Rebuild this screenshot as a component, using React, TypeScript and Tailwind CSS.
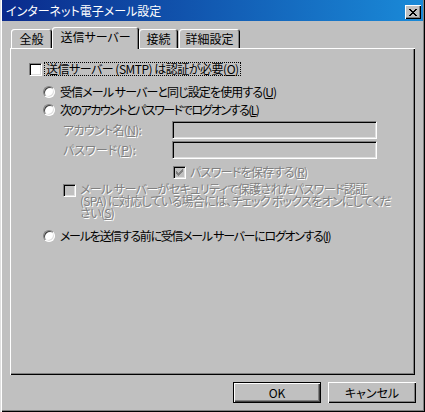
import React from "react";

const X_PIX = ["11000011", "01100110", "00111100", "00011000", "00111100", "01100110", "11000011"];

function CloseGlyph() {
  const rects: React.ReactElement[] = [];
  X_PIX.forEach((row, y) =>
    row.split("").forEach((c, x) => {
      if (c === "1") rects.push(<rect key={`${x}-${y}`} x={x} y={y} width={1} height={1} fill="#000" />);
    })
  );
  return (
    <svg width="8" height="7" viewBox="0 0 8 7" shapeRendering="crispEdges">
      {rects}
    </svg>
  );
}

function Radio() {
  return (
    <div className="w-[12px] h-[12px] shrink-0 rounded-full bg-white border border-t-[#808080] border-l-[#808080] border-b-white border-r-white shadow-[inset_1px_1px_0_#404040,inset_-1px_-1px_0_#dfdfdf]" />
  );
}

function Checkbox({ disabled, checked }: { disabled?: boolean; checked?: boolean }) {
  return (
    <div
      className={
        "w-[13px] h-[13px] shrink-0 flex items-center justify-center border border-t-[#808080] border-l-[#808080] border-b-white border-r-white shadow-[inset_1px_1px_0_#000,inset_-1px_-1px_0_#dfdfdf] " +
        (disabled ? "bg-[#c0c0c0]" : "bg-white")
      }
    >
      {checked && (
        <svg width="7" height="7" viewBox="0 0 7 7" shapeRendering="crispEdges">
          <path
            d="M0 2h1v3H0zM1 3h1v3H1zM2 4h1v3H2zM3 3h1v3H3zM4 2h1v3H4zM5 1h1v3H5zM6 0h1v3H6z"
            fill={disabled ? "#808080" : "#000"}
          />
        </svg>
      )}
    </div>
  );
}

const dis = "text-[#808080] [text-shadow:1px_1px_0_#fff]";

function Tab({ children, className }: { children: React.ReactNode; className?: string }) {
  return (
    <div
      className={
        "h-[19px] mb-[1px] flex items-center justify-center rounded-t-[3px] shadow-[inset_1px_1px_0_#fff,inset_-1px_0_0_#000,inset_-2px_0_0_#808080] " +
        (className ?? "")
      }
    >
      {children}
    </div>
  );
}

function Input() {
  return (
    <div className="w-[205px] h-[18px] bg-[#c0c0c0] border border-t-[#808080] border-l-[#808080] border-b-white border-r-white shadow-[inset_1px_1px_0_#000,inset_-1px_-1px_0_#dfdfdf]" />
  );
}

export default function App() {
  return (
    <div className="w-[425px] h-[412px] bg-[#c0c0c0] flex flex-col px-[2px] pb-[2px] shadow-[inset_1px_0_0_#dfdfdf,inset_2px_0_0_#fff,inset_-1px_-1px_0_#000,inset_-2px_-2px_0_#808080] font-['Noto_Sans_CJK_JP','Noto_Sans',sans-serif] text-[12px] leading-[14px] text-black [font-feature-settings:'palt'] overflow-hidden">
      {/* Title bar */}
      <div className="h-[21px] shrink-0 flex items-center justify-between pl-[4px] pr-[2px] pt-[1px] bg-[linear-gradient(to_right,#0a2a8c,#1a8ad8)]">
        <span className="text-white">インターネット電子メール設定</span>
        <div className="w-[16px] h-[14px] mt-[2px] bg-[#c0c0c0] flex items-center justify-center shadow-[inset_1px_1px_0_#fff,inset_-1px_-1px_0_#000,inset_-2px_-2px_0_#808080]">
          <CloseGlyph />
        </div>
      </div>

      {/* Tabs */}
      <div className="mt-[6px] ml-[8px] h-[22px] flex items-end relative z-10">
        <Tab className="w-[41px] ml-[1px]">全般</Tab>
        <div className="w-[87px] h-[22px] bg-[#c0c0c0] flex items-center justify-center pb-[2px] rounded-t-[3px] shadow-[inset_1px_1px_0_#fff,inset_-1px_0_0_#000,inset_-2px_0_0_#808080]">
          送信サーバー
        </div>
        <Tab className="w-[39px]">接続</Tab>
        <Tab className="w-[61px] ml-[1px]">詳細設定</Tab>
      </div>

      {/* Panel */}
      <div className="-mt-[1px] ml-[8px] w-[405px] h-[327px] shrink-0 flex flex-col shadow-[inset_1px_1px_0_#fff,inset_-1px_-1px_0_#000,inset_-2px_-2px_0_#808080]">
        <div className="mt-[14px] ml-[19px] h-[14px] flex items-center">
          <Checkbox />
          <span className="ml-[2px] h-[14px] px-[1px] border border-dotted border-black flex items-center whitespace-nowrap tracking-[-0.5px]">
            送信サーバー (SMTP) は認証が必要(<u>O</u>)
          </span>
        </div>

        <div className="mt-[8px] ml-[33px] h-[16px] flex items-center">
          <Radio />
          <span className="ml-[5px] whitespace-nowrap tracking-[-0.9px]">
            受信メール サーバーと同じ設定を使用する(<u>U</u>)
          </span>
        </div>

        <div className="mt-[2px] ml-[33px] h-[16px] flex items-center">
          <Radio />
          <span className="ml-[5px] whitespace-nowrap tracking-[-1.5px]">
            次のアカウントとパスワードでログオンする(<u>L</u>)
          </span>
        </div>

        <div className="mt-[3px] ml-[53px] h-[18px] flex items-center">
          <span className={"w-[109px] whitespace-nowrap tracking-[-0.7px] " + dis}>
            アカウント名(<u>N</u>):
          </span>
          <Input />
        </div>

        <div className="mt-[2px] ml-[53px] h-[18px] flex items-center">
          <span className={"w-[109px] whitespace-nowrap " + dis}>
            パスワード(<u>P</u>):
          </span>
          <Input />
        </div>

        <div className="mt-[5px] ml-[163px] h-[16px] flex items-center">
          <Checkbox disabled checked />
          <span className={"ml-[4px] whitespace-nowrap tracking-[-0.7px] " + dis}>
            パスワードを保存する(<u>R</u>)
          </span>
        </div>

        <div className="mt-[3px] ml-[53px] flex items-start">
          <div className="mt-[1px]">
            <Checkbox disabled />
          </div>
          <div className={"ml-[4px] flex flex-col whitespace-nowrap " + dis}>
            <span className="h-[12px] leading-[12px] tracking-[-0.6px]">
              メール サーバーがセキュリティで保護されたパスワード認証
            </span>
            <span className="h-[12px] leading-[12px] tracking-[-0.7px]">
              (SPA) に対応している場合には、チェック ボックスをオンにしてくだ
            </span>
            <span className="h-[12px] leading-[12px] tracking-[-0.6px]">
              さい(<u>S</u>)
            </span>
          </div>
        </div>

        <div className="mt-[9px] ml-[33px] h-[16px] flex items-center">
          <Radio />
          <span className="ml-[5px] whitespace-nowrap tracking-[-1.3px]">
            メールを送信する前に受信メール サーバーにログオンする(<u>I</u>)
          </span>
        </div>
      </div>

      {/* Buttons */}
      <div className="mt-[7px] pr-[7px] flex justify-end gap-[7px]">
        <div className="w-[88px] h-[21px] flex items-center justify-center border border-black shadow-[inset_1px_1px_0_#fff,inset_-1px_-1px_0_#404040,inset_-2px_-2px_0_#808080]">
          OK
        </div>
        <div className="w-[88px] h-[21px] flex items-center justify-center shadow-[inset_1px_1px_0_#fff,inset_-1px_-1px_0_#000,inset_-2px_-2px_0_#808080]">
          キャンセル
        </div>
      </div>
    </div>
  );
}
